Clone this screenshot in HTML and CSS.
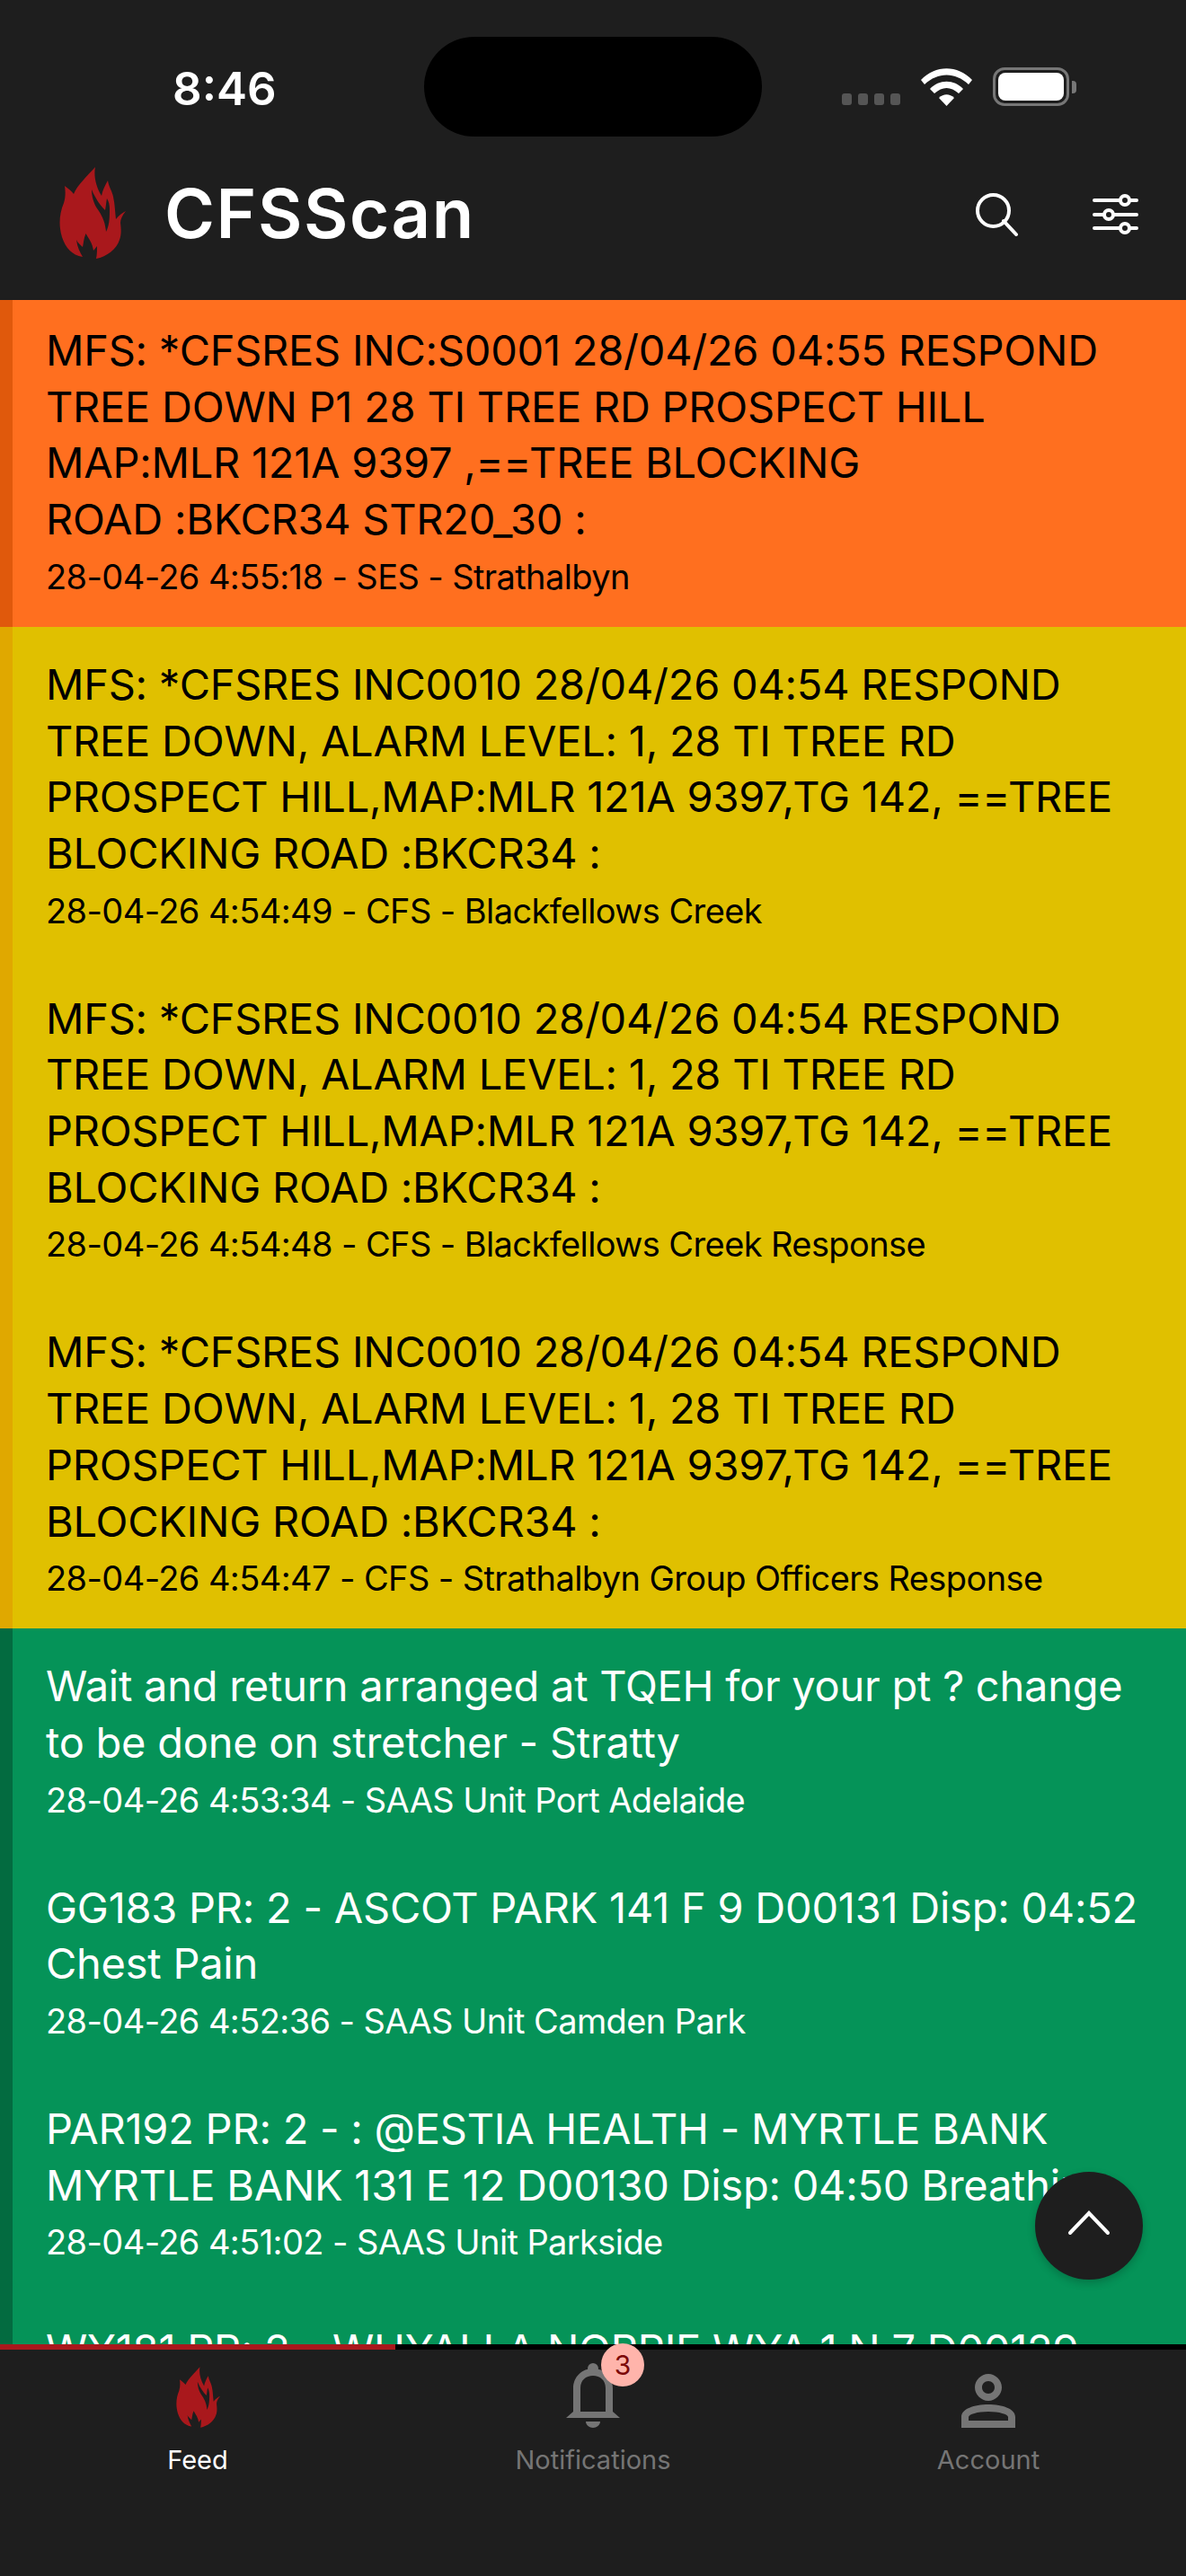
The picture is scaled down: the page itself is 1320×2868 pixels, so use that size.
FILE: index.html
```html
<!DOCTYPE html>
<html lang="en">
  <head>
    <meta charset="UTF-8" />
    <meta name="viewport" content="width=device-width, initial-scale=1.0" />
    <title>CFSScan</title>
    <link rel="stylesheet" href="styles.css">
  </head>
  <body>
    <svg class="defs" width="0" height="0">
      <symbol id="flame" viewBox="0 0 74 102">
        <path fill-rule="evenodd" d="M40 0 C38 10 41 22 47 32 C48 26 51 20 54 15 C55 22 59 27 60 33 C62 42 62 50 63 58 C66 54 70 51 74 49 C70 54 68 58 68 62 C69 70 69 76 67 81 C64 91 53 100 41 102 C42 97 42 93 42 88 L38 93 C37 85 33 80 29.5 74 C27 80 27 85 26 89 C23 86 20 84 19 81 C20 89 23 95 26 100 C14 98 7 90 3 78 C-1 65 0 52 5 40 C7 34 7 27 6 21 C10 24 14 27 16 30 C20 20 32 9 40 0 Z M36 25 C36 32 38 40 42 46 C47 53 51 60 52 72 C56 65 56 55 56 47 C56 42 55 38 53 35 C52 40 52 43 51 48 C46 43 40 35 36 25 Z" />
      </symbol>
    </svg>

    <header class="top">
      <div class="status">
        <span class="time">8:46</span>
        <div class="island"></div>
        <div class="status-icons">
          <div class="dots"><i></i><i></i><i></i><i></i></div>
          <svg class="wifi" width="57" height="42" viewBox="0 0 57 42">
            <path d="M0 13 C16 -4 41 -4 57 13 L53 18 C38 4 19 4 4 18 Z" />
            <path d="M10 23 C20 12 37 12 47 23 L42 28 C33 20 24 20 15 28 Z" />
            <path d="M20 33 C25 28 32 28 37 33 L28.500 42 Z" />
          </svg>
          <div class="battery"><div class="battery-fill"></div></div>
          <div class="battery-cap"></div>
        </div>
      </div>
      <div class="appbar">
        <svg class="logo"><use href="#flame" /></svg>
        <h1>CFSScan</h1>
        <svg class="search" width="48" height="48" viewBox="0 0 48 48">
          <circle cx="19.500" cy="19.500" r="17.500" />
          <path d="M31 31 L45 46" />
        </svg>
        <svg class="sliders" width="51" height="40" viewBox="0 0 51 40">
          <path d="M2 5 H30 M42 5 H49 M2 21 H12 M24 21 H49 M2 36 H30 M42 36 H49" />
          <circle cx="36" cy="5" r="5" />
          <circle cx="18" cy="21" r="5" />
          <circle cx="36" cy="36" r="5" />
        </svg>
      </div>
    </header>

    <main class="feed">
      <article class="item orange">
        <p class="msg">MFS: *CFSRES INC:S0001 28/04/26 04:55 RESPOND TREE DOWN P1 28 TI TREE RD PROSPECT HILL MAP:MLR 121A 9397 ,==TREE BLOCKING ROAD&nbsp;:BKCR34 STR20_30 :</p>
        <p class="meta">28-04-26 4:55:18 - SES - Strathalbyn</p>
      </article>
      <article class="item yellow">
        <p class="msg">MFS: *CFSRES INC0010 28/04/26 04:54 RESPOND TREE DOWN, ALARM LEVEL: 1, 28 TI TREE RD PROSPECT HILL,MAP:MLR 121A 9397,TG 142, ==TREE BLOCKING ROAD :BKCR34 :</p>
        <p class="meta">28-04-26 4:54:49 - CFS - Blackfellows Creek</p>
      </article>
      <article class="item yellow">
        <p class="msg">MFS: *CFSRES INC0010 28/04/26 04:54 RESPOND TREE DOWN, ALARM LEVEL: 1, 28 TI TREE RD PROSPECT HILL,MAP:MLR 121A 9397,TG 142, ==TREE BLOCKING ROAD :BKCR34 :</p>
        <p class="meta">28-04-26 4:54:48 - CFS - Blackfellows Creek Response</p>
      </article>
      <article class="item yellow">
        <p class="msg">MFS: *CFSRES INC0010 28/04/26 04:54 RESPOND TREE DOWN, ALARM LEVEL: 1, 28 TI TREE RD PROSPECT HILL,MAP:MLR 121A 9397,TG 142, ==TREE BLOCKING ROAD :BKCR34 :</p>
        <p class="meta">28-04-26 4:54:47 - CFS - Strathalbyn Group Officers Response</p>
      </article>
      <article class="item green">
        <p class="msg">Wait and return arranged at TQEH for your pt ? change to be done on stretcher - Stratty</p>
        <p class="meta">28-04-26 4:53:34 - SAAS Unit Port Adelaide</p>
      </article>
      <article class="item green">
        <p class="msg">GG183 PR: 2 - ASCOT PARK 141 F 9 D00131 Disp: 04:52 Chest Pain</p>
        <p class="meta">28-04-26 4:52:36 - SAAS Unit Camden Park</p>
      </article>
      <article class="item green">
        <p class="msg">PAR192 PR: 2 - : @ESTIA HEALTH - MYRTLE BANK MYRTLE BANK 131 E 12 D00130 Disp: 04:50 Breathing</p>
        <p class="meta">28-04-26 4:51:02 - SAAS Unit Parkside</p>
      </article>
      <article class="item green">
        <p class="msg">WY181 PR: 2 - WHYALLA NORRIE WYA 1 N 7 D00129</p>
      </article>
    </main>

    <button class="to-top" aria-label="Back to top">
      <svg width="48" height="28" viewBox="0 0 48 28"><path d="M3 25 L24 3 L45 25" /></svg>
    </button>

    <nav class="tabs">
      <div class="progress"></div>
      <div class="tab active">
        <svg class="tab-flame"><use href="#flame" /></svg>
        <span>Feed</span>
      </div>
      <div class="tab">
        <div class="bell-wrap">
          <svg width="60" height="72" viewBox="0 0 60 72">
            <circle cx="30" cy="6" r="6" />
            <path fill-rule="evenodd" d="M0 61 L8 54 V28 C8 15 18 6 30 6 C42 6 52 15 52 28 V54 L60 61 Z M16 54 H44 V28 C44 19 38 14 30 14 C22 14 16 19 16 28 Z" />
            <path d="M22 65 H38 C38 69 34 72 30 72 C26 72 22 69 22 65 Z" />
          </svg>
          <span class="badge">3</span>
        </div>
        <span>Notifications</span>
      </div>
      <div class="tab">
        <svg width="60" height="60" viewBox="0 0 60 60">
          <path fill-rule="evenodd" d="M30 0 C38 0 45 7 45 15 C45 23 38 30 30 30 C22 30 15 23 15 15 C15 7 22 0 30 0 Z M30 8 C26 8 23 11 23 15 C23 19 26 22 30 22 C34 22 37 19 37 15 C37 11 34 8 30 8 Z" />
          <path fill-rule="evenodd" d="M0 60 V48 C0 39 14 34 30 34 C46 34 60 39 60 48 V60 Z M8 52 H52 V48 C52 45 42 42 30 42 C18 42 8 45 8 48 Z" />
        </svg>
        <span>Account</span>
      </div>
    </nav>
  </body>
</html>
```

FILE: styles.css
```css
html {
  font-family: "Inter", "Liberation Sans", sans-serif;
}

body {
  margin: 0;
  width: 1320px;
  height: 2868px;
  display: flex;
  flex-direction: column;
  position: relative;
  overflow: hidden;
  background-color: #1e1e1e;
}

.defs {
  position: absolute;
}

/* header */
.top {
  height: 334px;
  flex: none;
  background-color: #1e1e1e;
  color: #fff;
}

.status {
  display: flex;
  align-items: center;
  height: 111px;
  padding-top: 41px;
}

.time {
  width: 116px;
  margin-left: 192px;
  margin-right: 164px;
  font-size: 51px;
  font-weight: 600;
  line-height: 1;
  padding-top: 4px;
}

.island {
  width: 376px;
  height: 111px;
  border-radius: 56px;
  background-color: #000;
}

.status-icons {
  display: flex;
  align-items: flex-end;
  margin-left: 89px;
  height: 43px;
}

.dots {
  display: flex;
  gap: 7px;
  margin-right: 23px;
  padding-bottom: 1px;
}

.dots i {
  width: 11px;
  height: 13px;
  border-radius: 3px;
  background-color: #555;
}

.wifi {
  fill: #fff;
  margin-right: 23px;
}

.battery {
  width: 85px;
  height: 43px;
  box-sizing: border-box;
  border: 3px solid #777;
  border-radius: 13px;
  padding: 3px;
}

.battery-fill {
  height: 100%;
  background-color: #fff;
  border-radius: 8px;
}

.battery-cap {
  width: 5px;
  height: 14px;
  margin-left: 3px;
  margin-bottom: 14px;
  background-color: #777;
  border-radius: 0 4px 4px 0;
}

.appbar {
  display: flex;
  align-items: center;
  height: 102px;
  margin-top: 34px;
  padding-left: 66px;
}

.logo {
  width: 74px;
  height: 102px;
  fill: #a9181c;
}

h1 {
  margin: 0 0 0 43px;
  flex: 1;
  font-size: 76px;
  font-weight: 600;
  letter-spacing: 1.6px;
  line-height: 1;
}

.search {
  fill: none;
  stroke: #fff;
  stroke-width: 4;
  stroke-linecap: round;
  margin-right: 82px;
  margin-top: 4px;
}

.sliders {
  fill: #1e1e1e;
  stroke: #fff;
  stroke-width: 4;
  stroke-linecap: round;
  margin-right: 53px;
  margin-top: 2px;
  overflow: visible;
}

/* feed */
.feed {
  flex: 1;
  min-height: 0;
  overflow: hidden;
}

.item {
  padding: 33px 28px 30px 37px;
  border-left: 14px solid transparent;
}

.item:first-child {
  padding-top: 25px;
}

.item p {
  margin: 0;
}

.msg {
  font-size: 47px;
  letter-spacing: -0.25px;
  line-height: 62.7px;
}

.item .meta {
  margin-top: 6px;
  font-size: 38px;
  letter-spacing: -0.6px;
  line-height: 52px;
}

.orange {
  background-color: #ff6f1f;
  border-left-color: #e0590c;
  color: #000;
}

.yellow {
  background-color: #e0c000;
  border-left-color: #e0a800;
  color: #000;
}

.green {
  background-color: #059358;
  border-left-color: #036b40;
  color: #fff;
}

.to-top {
  position: absolute;
  left: 1152px;
  top: 2418px;
  width: 120px;
  height: 120px;
  border: none;
  border-radius: 50%;
  padding: 0 0 6px;
  background-color: #1e1e1e;
  box-shadow: 0 4px 10px rgba(0, 0, 0, 0.2);
}

.to-top svg {
  fill: none;
  stroke: #fff;
  stroke-width: 4;
  stroke-linecap: round;
  display: block;
  margin: 0 auto;
}

/* tab bar */
.tabs {
  height: 252px;
  flex: none;
  display: grid;
  grid-template-columns: 1fr 1fr 1fr;
  position: relative;
  border-top: 6px solid #000;
  background-color: #1e1e1e;
}

.progress {
  position: absolute;
  top: -6px;
  left: 0;
  width: 440px;
  height: 6px;
  background-color: #a9181c;
}

.tab {
  display: flex;
  flex-direction: column;
  align-items: center;
  height: 140px;
  justify-content: flex-end;
  color: #757575;
  fill: #757575;
  font-size: 29px;
  line-height: 34px;
}

.tab svg {
  display: block;
}

.tab span {
  margin-top: 19px;
}

.tab.active {
  color: #fff;
}

.tab-flame {
  width: 49px;
  height: 68px;
  fill: #a9181c;
}

.bell-wrap {
  position: relative;
}

.tab .badge {
  position: absolute;
  left: 39px;
  top: -22px;
  width: 48px;
  height: 48px;
  margin: 0;
  border-radius: 50%;
  background-color: #ffb4ab;
  color: #7d0a0a;
  font-size: 30px;
  line-height: 48px;
  text-align: center;
}
```
